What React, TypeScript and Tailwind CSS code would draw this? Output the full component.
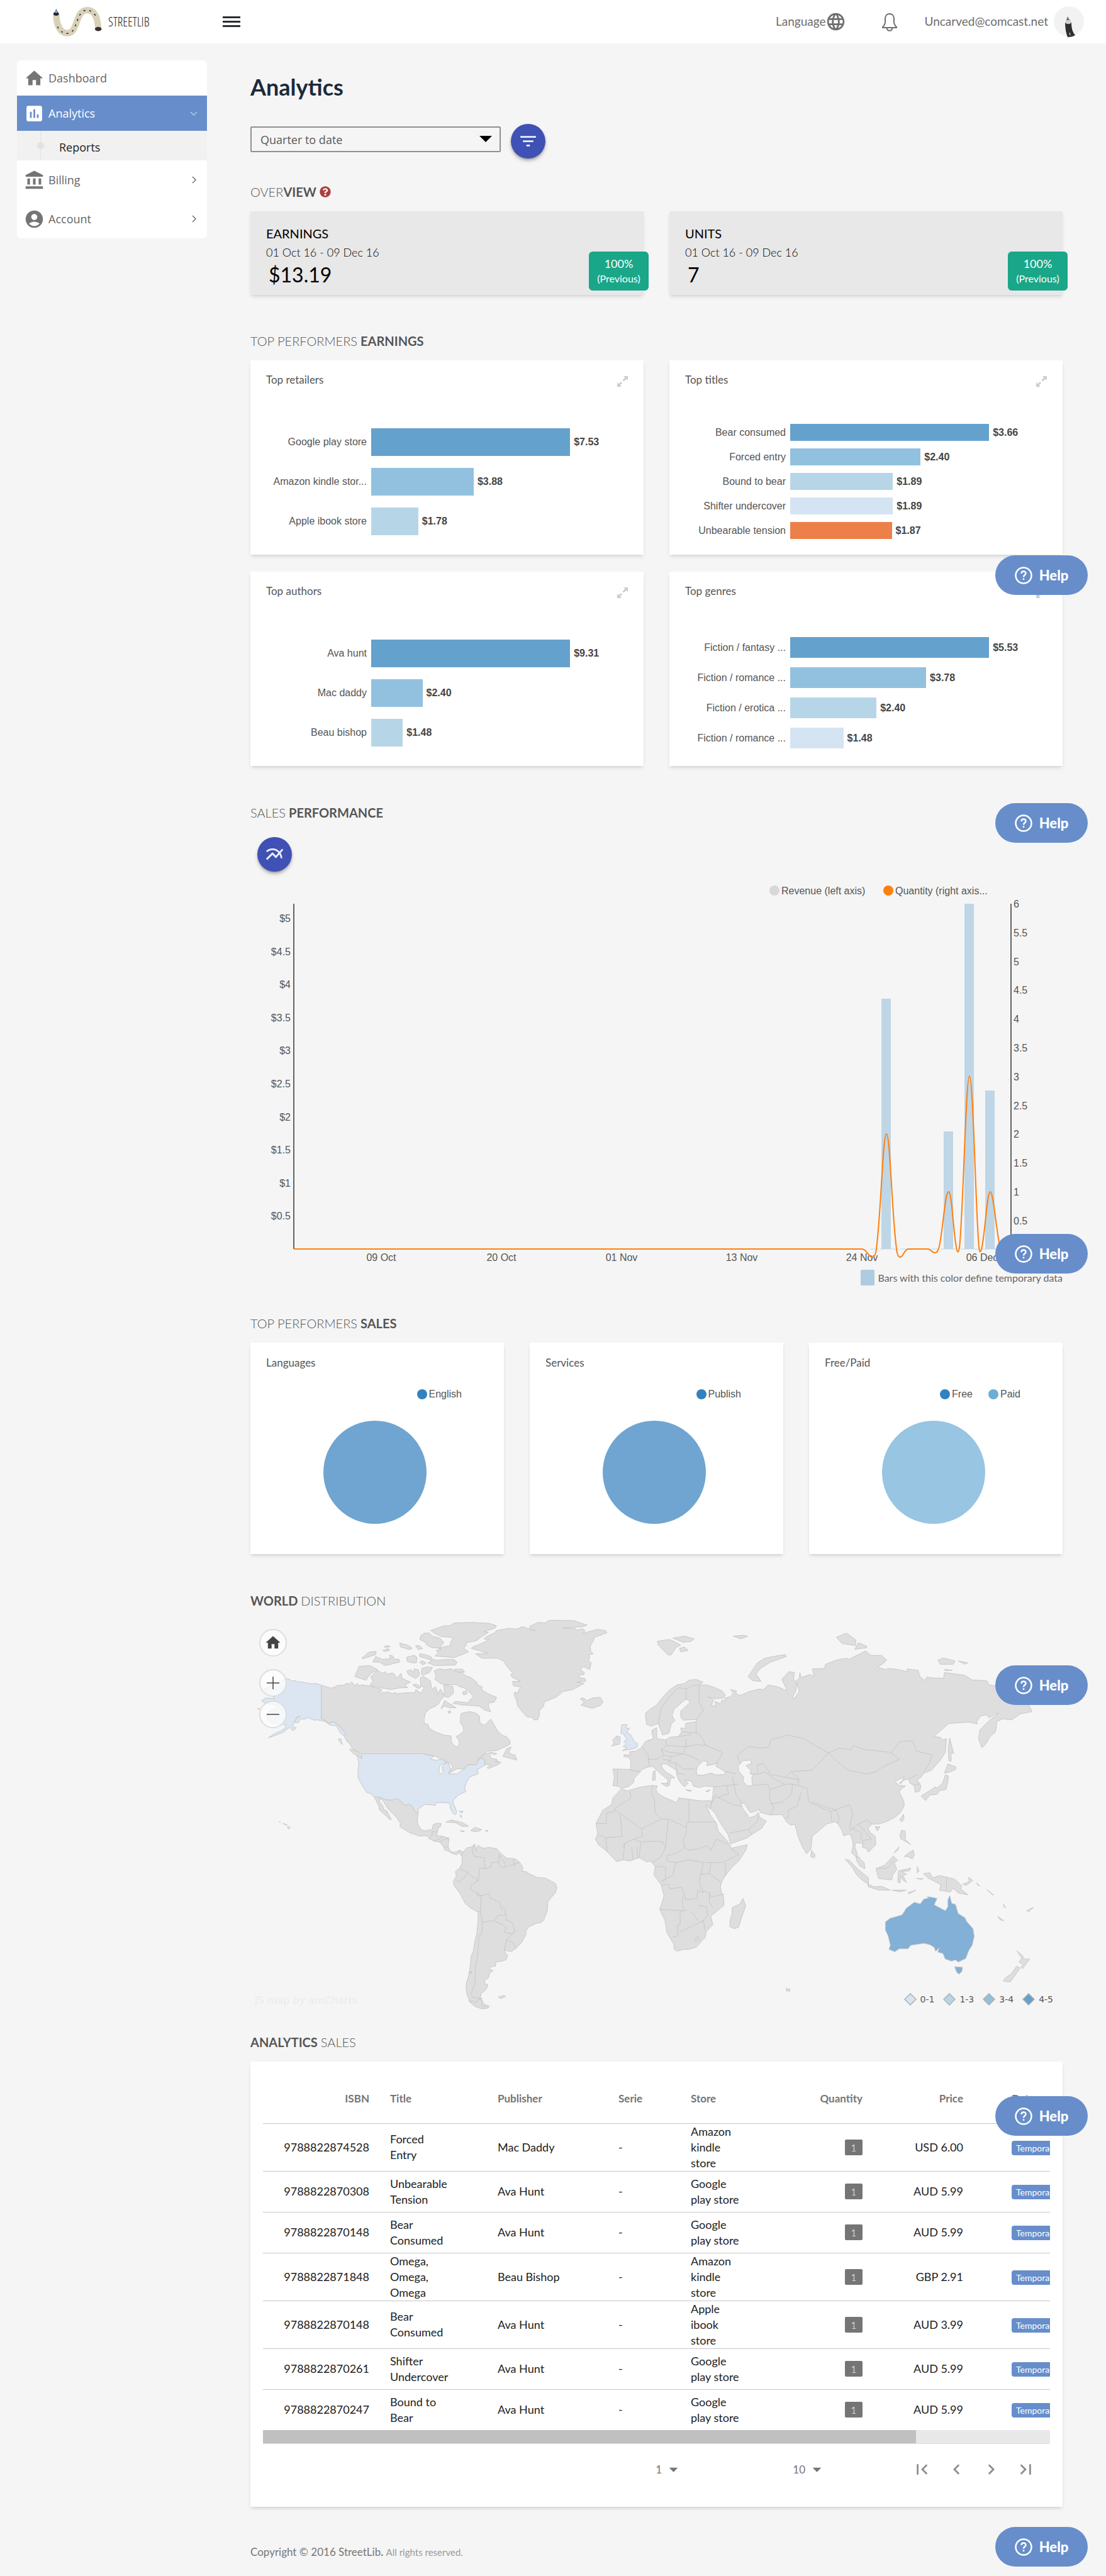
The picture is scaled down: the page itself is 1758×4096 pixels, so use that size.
import type { ReactNode } from 'react';
import {
  MdAccountBalance,
  MdAccountCircle,
  MdArrowDropDown,
  MdAssessment,
  MdChevronLeft,
  MdChevronRight,
  MdFilterList,
  MdFirstPage,
  MdHome,
  MdLanguage,
  MdLastPage,
  MdMultilineChart,
} from 'react-icons/md';
import { FaQuestionCircle } from 'react-icons/fa';

const BLUES = ['bg-[#65a1cd]', 'bg-[#91c1df]', 'bg-[#b6d6e7]', 'bg-[#d5e4f2]', 'bg-[#ed7f49]'];

type Bar = { label: string; value: number };

const RETAILERS: Bar[] = [
  { label: 'Google play store', value: 7.53 },
  { label: 'Amazon kindle stor...', value: 3.88 },
  { label: 'Apple ibook store', value: 1.78 },
];

const TITLES: Bar[] = [
  { label: 'Bear consumed', value: 3.66 },
  { label: 'Forced entry', value: 2.4 },
  { label: 'Bound to bear', value: 1.89 },
  { label: 'Shifter undercover', value: 1.89 },
  { label: 'Unbearable tension', value: 1.87 },
];

const AUTHORS: Bar[] = [
  { label: 'Ava hunt', value: 9.31 },
  { label: 'Mac daddy', value: 2.4 },
  { label: 'Beau bishop', value: 1.48 },
];

const GENRES: Bar[] = [
  { label: 'Fiction / fantasy ...', value: 5.53 },
  { label: 'Fiction / romance ...', value: 3.78 },
  { label: 'Fiction / erotica ...', value: 2.4 },
  { label: 'Fiction / romance ...', value: 1.48 },
];

const SALES = [
  { isbn: '9788822874528', title: 'Forced Entry', publisher: 'Mac Daddy', store: 'Amazon kindle store', price: 'USD 6.00' },
  { isbn: '9788822870308', title: 'Unbearable Tension', publisher: 'Ava Hunt', store: 'Google play store', price: 'AUD 5.99' },
  { isbn: '9788822870148', title: 'Bear Consumed', publisher: 'Ava Hunt', store: 'Google play store', price: 'AUD 5.99' },
  { isbn: '9788822871848', title: 'Omega, Omega, Omega', publisher: 'Beau Bishop', store: 'Amazon kindle store', price: 'GBP 2.91' },
  { isbn: '9788822870148', title: 'Bear Consumed', publisher: 'Ava Hunt', store: 'Apple ibook store', price: 'AUD 3.99' },
  { isbn: '9788822870261', title: 'Shifter Undercover', publisher: 'Ava Hunt', store: 'Google play store', price: 'AUD 5.99' },
  { isbn: '9788822870247', title: 'Bound to Bear', publisher: 'Ava Hunt', store: 'Google play store', price: 'AUD 5.99' },
];

// Americas, drawn in their own coordinate space
const AMERICAS = [
  'M288 346 323 357 332 354 340 352 345 347 368 346 382 339 390 342 398 334 410 347 420 340 425 349 432 345 449 347 470 350 485 356 503 359 508 366 495 370 503 374 523 372 530 370 545 377 555 372 562 377 590 374 628 373 631 362 650 376 655 365 662 355 649 348 647 320 657 314 672 322 684 330 687 352 692 362 702 350 712 379 720 360 732 379 729 392 721 400 715 412 700 424 683 430 665 448 661 470 662 486 674 487 680 502 700 515 735 528 759 530 760 552 770 565 780 571 789 560 787 545 777 532 788 527 805 513 803 498 792 481 795 450 803 446 828 442 850 448 862 458 864 483 880 492 903 469 928 513 945 528 960 533 973 548 973 560 950 572 925 583 905 585 893 585 870 603 854 619 868 607 880 597 895 593 905 590 925 595 915 598 900 590 900 600 905 612 925 615 928 622 918 622 940 626 925 637 893 649 890 645 903 633 882 634 882 618 874 613 862 613 852 634 818 635 805 650 780 650 752 665 765 642 758 632 738 620 700 603 662 597 657 592 655 595 434 595 425 590 400 576 392 560 382 552 372 533 377 520 360 502 345 486 333 478 316 485 297 470 288 468Z',
  'M480 752 498 752 525 762 550 763 552 759 568 759 580 770 582 777 595 782 605 777 615 782 624 797 630 806 639 810 636 840 640 855 650 870 663 875 690 870 694 852 705 848 723 848 720 860 714 862 712 870 706 892 730 895 752 902 749 920 749 935 755 945 762 952 775 952 790 945 800 950 801 963 797 966 786 953 780 962 765 958 752 950 735 944 732 932 717 915 697 912 680 904 670 892 645 894 610 882 573 860 575 847 560 825 540 805 525 788 512 764 498 757 500 770 510 783 515 797 525 802 542 832 538 836 523 820 513 812 498 797 497 785Z',
  'M801 955 815 937 833 933 846 923 845 935 851 950 850 935 858 928 875 938 900 935 925 940 935 952 960 974 990 976 1007 988 1020 1008 1015 1021 1035 1024 1040 1030 1064 1040 1070 1044 1100 1046 1115 1054 1137 1065 1143 1083 1137 1100 1120 1120 1110 1132 1108 1165 1100 1185 1095 1200 1085 1208 1070 1210 1040 1224 1031 1238 1030 1253 1015 1280 995 1300 978 1313 952 1308 955 1316 965 1328 958 1343 940 1349 922 1350 920 1366 900 1369 900 1378 912 1382 898 1392 895 1408 880 1418 882 1430 893 1434 885 1452 868 1465 865 1478 870 1485 860 1485 852 1496 825 1490 817 1470 813 1445 815 1425 823 1400 825 1385 830 1385 830 1395 835 1385 825 1390 830 1350 830 1335 840 1310 846 1270 852 1250 857 1200 857 1170 830 1155 810 1138 790 1100 768 1070 768 1055 778 1040 775 1022 790 1010 800 990 798 966Z',
  'M822 1492 850 1500 857 1488 870 1488 880 1505 898 1511 893 1518 870 1521 845 1512Z',
  'M835 208 875 192 897 180 878 178 890 168 920 155 922 148 965 140 1000 142 1017 133 1065 150 1045 140 1045 132 1075 118 1100 120 1113 111 1145 110 1205 112 1253 128 1240 133 1165 139 1210 140 1216 146 1235 141 1245 148 1237 158 1290 143 1320 148 1324 156 1300 165 1275 174 1278 180 1264 203 1265 222 1275 232 1260 235 1262 248 1257 255 1267 265 1262 290 1240 278 1228 290 1243 300 1240 308 1225 308 1222 318 1245 322 1247 332 1215 335 1241 340 1200 362 1165 369 1140 390 1097 407 1095 422 1080 438 1080 452 1073 472 1060 472 1050 462 1035 462 1015 440 1000 420 997 402 988 382 990 370 998 375 1012 352 985 348 982 333 1010 332 982 318 975 308 983 303 963 280 950 258 928 248 870 248 848 232 895 230 833 213Z',
  'M685 147 735 130 755 130 770 120 835 118 870 120 900 122 923 130 920 138 890 148 877 152 895 154 870 170 850 185 812 192 815 200 805 212 822 225 798 235 770 246 700 240 712 230 705 220 725 217 712 213 740 205 760 202 755 195 765 178 758 172 725 170 700 158Z',
  'M650 165 662 157 680 157 690 168 718 175 733 190 718 210 690 210 670 200 665 190 645 180Z',
  'M645 232 665 235 685 242 690 250 704 256 735 253 770 253 780 262 775 273 735 274 700 275 675 265 690 255 665 248 645 243Z',
  'M697 295 715 286 735 290 760 286 772 295 800 300 812 312 830 318 852 335 855 345 872 352 870 362 892 377 924 390 915 408 895 410 895 425 903 443 878 435 862 422 835 420 800 418 765 412 775 405 822 410 828 398 840 390 830 375 805 355 790 352 780 345 762 343 740 345 722 340 700 325 705 310Z',
  'M465 345 475 332 467 315 492 292 510 303 520 297 525 305 550 302 562 320 578 303 580 320 590 325 612 335 590 345 602 355 570 356 540 362 475 350Z',
  'M410 315 425 278 465 275 492 290 465 305 450 328Z',
  'M598 295 612 290 625 300 625 287 640 290 645 310 630 322 605 308Z',
  'M650 303 653 285 672 280 692 282 680 300 655 310Z',
  'M475 262 485 242 510 252 540 250 535 237 545 238 555 252 570 252 572 262 520 275 500 263Z',
  'M435 248 460 226 487 223 485 235 440 250Z',
  'M597 245 625 237 635 245 633 265 620 265 600 260Z',
  'M572 193 600 200 618 212 610 217 575 207Z',
  'M630 202 645 203 655 213 640 217Z',
  'M515 207 525 202 538 206 525 209Z',
  'M510 220 530 213 537 219 520 224Z',
  'M645 262 655 257 668 266 655 272Z',
  'M770 288 800 288 808 298 780 299Z',
  'M620 345 632 342 650 352 640 359Z',
  'M722 432 730 415 735 402 765 420 777 428 755 428 735 422Z',
  'M800 372 812 366 818 376 805 382Z',
  'M747 442 755 438 758 446 750 448Z',
  'M733 345 765 350 768 375 750 390 735 388Z',
  'M390 578 420 587 430 600 436 613 405 595Z',
  'M947 605 960 577 977 570 968 590 985 600 990 598 998 618 975 612Z',
  'M1227 395 1240 392 1250 402 1275 392 1300 390 1311 407 1300 420 1272 430 1245 423 1230 418 1243 408Z',
  'M740 843 760 835 800 845 823 858 800 859 775 845Z',
  'M830 874 845 862 870 870 862 875 845 878Z',
  'M882 873 893 874 890 878Z',
  'M792 874 808 876 800 879Z',
  'M787 804 802 803 800 810Z',
  'M792 816 798 822 796 828Z',
  'M930 1478 950 1472 957 1476 940 1484Z',
  'M1345 545 1360 530 1373 545 1370 560 1342 567 1350 555Z',
  'M57 430 64 432 60 436Z',
];

const AMERICAS_LIGHT = [
  'M162 322 175 326 180 331 194 329 201 334 216 334 250 341 270 340 288 346V468L297 471 316 485 333 478 345 488 360 502 377 522 371 532 358 520 343 494 320 491 300 477 275 472 262 473 235 462 230 470 212 468 204 483 190 480 200 464 211 459 200 461 187 486 185 495 165 504 153 516 125 527 96 537 118 522 140 512 157 503 158 488 130 488 110 485 92 470 88 455 100 440 125 430 130 420 110 415 85 412 70 402 90 392 120 395 104 380 85 372 80 360 105 350Z',
  'M178 504 190 497 198 501 185 511Z',
  'M350 542 360 540 361 552 366 562 354 552Z',
  'M434 595 434 613 418 600 424 630 421 660 421 682 427 693 440 715 452 735 468 740 480 752 498 752 525 762 550 763 552 759 568 759 580 770 582 777 595 782 605 777 615 782 624 797 630 806 639 810 640 795 655 785 665 778 702 782 703 773 735 772 755 775 755 790 765 810 772 817 778 812 778 800 768 778 766 765 785 745 812 732 808 722 812 706 825 680 858 667 854 652 882 636 880 618 874 613 862 613 852 634 818 636 808 650 780 668 750 668 756 650 750 630 738 628 726 642 730 662 720 669 714 660 718 638 735 628 745 625 722 613 705 619 683 614 697 604 662 597 657 592 655 595Z',
  'M1378 490 1398 489 1392 502 1407 502 1397 518 1410 525 1422 548 1436 558 1433 572 1415 578 1380 584 1398 573 1383 569 1395 560 1385 550 1397 545 1388 527 1375 520Z',
  'M1363 530 1375 535 1370 543 1362 540Z',
  'M165 858 176 863 168 868Z',
  'M148 848 160 851 165 854 155 852Z',
  'M136 841 140 842 137 844Z',
];

const AMERICAS_BORDERS = [
  'M845 925 835 945 843 968 880 972 880 1000 885 1012 862 1010 858 1055 835 1040 820 1025 790 1012',
  'M885 1012 905 1005 905 990 932 988 935 958',
  'M932 960 950 985 958 1005 1007 990M985 978 990 1005M958 1005 940 1008 930 990',
  'M858 1055 835 1070 828 1085 850 1100 868 1110 897 1102 900 1118 935 1135 940 1155 955 1160 958 1180 928 1182 918 1200 885 1205 872 1208 865 1165 868 1110 855 1112 856 1098M857 1170 865 1165',
  'M818 1025 810 1040 790 1060 778 1055',
  'M958 1180 960 1200 978 1205 984 1218 990 1240 980 1248 950 1243 960 1228 945 1215 918 1203',
  'M990 1240 960 1270 952 1308M960 1270 982 1280 995 1300',
  'M872 1208 872 1240 860 1258 855 1330 848 1365 845 1430 832 1465 838 1480 872 1483M870 1488V1512L890 1512',
  'M680 904 690 890 690 878 706 878M697 912 715 905 730 895M717 915 735 905 749 903M732 932 749 935M786 953 790 945',
];

const OLD_WORLD = [
  // Europe and Asia
  'M-9 448 5 435 30 418 50 390 75 362 100 345 125 340 140 328 165 325 188 335 178 345 200 345 230 355 255 368 265 382 258 393 230 395 205 388 225 400 217 418 232 424 230 405 250 415 252 402 268 400 262 393 283 388 292 375 282 362 303 367 300 377 318 383 345 370 380 360 395 362 412 345 445 352 475 367 472 355 458 325 482 297 502 300 498 320 510 345 505 370 495 390 500 395 518 370 512 345 508 330 518 320 520 300 524 318 555 307 570 315 563 287 605 285 608 270 645 255 680 248 688 252 720 235 745 222 765 238 800 238 818 255 805 268 785 280 815 290 820 285 850 288 887 297 887 287 925 292 930 312 948 330 955 316 975 320 1000 320 1012 322 1015 300 1085 310 1110 327 1160 330 1168 345 1195 350 1240 380 1305 420 1315 442 1275 450 1245 472 1215 468 1195 478 1190 515 1170 535 1155 562 1143 573 1132 540 1137 508 1165 478 1200 447 1190 450 1168 465 1160 453 1140 458 1125 478 1128 487 1100 480 1030 485 1005 508 978 533 1000 535 1010 545 1022 540 1018 590 1000 620 970 655 945 665 935 680 922 690 935 712 930 730 915 735 912 712 895 700 895 687 875 690 865 705 860 700 868 697 878 677 860 688 845 695 860 710 882 712 865 725 860 733 875 765 878 782 865 808 845 826 815 842 790 850 768 850 753 865 760 880 778 895 780 925 755 952 747 938 735 935 735 920 712 918 708 930 715 955 718 970 740 990 743 1012 725 1002 715 985 712 968 697 955 703 925 698 900 690 885 670 893 665 875 650 848 640 842 625 846 612 850 590 870 562 895 558 940 543 958 530 935 515 900 503 850 490 855 475 843 460 816 418 817 385 808 380 797 365 805 350 808 340 792 330 775 318 773 325 795 340 815 345 828 365 822 378 808 382 825 405 840 390 865 355 888 340 900 282 922 275 890 250 850 230 812 215 795 205 778 218 772 222 745 225 715 195 712 175 718 155 712 150 695 125 690 138 702 125 715 115 705 105 690 98 670 97 655 75 640 62 632 45 632 48 645 62 662 80 672 92 683 78 682 75 698 72 712 66 700 68 690 48 672 30 655 15 640 -5 645 -20 652 -33 668 -48 685 -50 700 -68 715 -92 720 -100 714 -120 710 -115 680 -120 650 -60 652 -58 625 -65 608 -83 605 -82 598 -60 600 -64 588 -40 585 -22 572 -8 550 5 545 0 548 18 540 13 510 30 500 30 540 60 545 75 535 105 532 115 515 112 502 130 502 128 485 165 478 170 470 120 473 112 462 112 440 143 410 140 400 128 398 115 410 90 432 82 455 92 475 80 485 72 520 50 527 35 485 10 495 -5 488Z',
  // Africa
  'M-91 722 -70 730 -30 717 0 712 15 710 32 712 27 725 35 740 60 755 98 772 105 755 140 760 180 766 215 765 218 780 212 795 197 778 215 820 235 848 240 875 262 900 280 925 285 938 340 925 335 945 310 985 285 1010 265 1037 252 1060 248 1080 252 1100 258 1105 260 1145 215 1185 222 1215 200 1240 195 1262 165 1297 140 1305 118 1306 100 1312 90 1305 88 1285 65 1245 58 1200 40 1160 50 1130 55 1110 45 1070 20 1035 25 1005 10 985 -5 987 -30 972 -45 978 -62 984 -85 980 -107 987 -140 950 -170 925 -180 905 -172 885 -178 848 -155 800 -125 780 -120 755Z',
  'M325 1120 335 1147 325 1175 310 1225 295 1230 280 1222 282 1195 288 1175 288 1153 315 1140Z',
  'M343 315 365 280 375 265 400 248 440 240 470 235 474 242 420 262 385 285 370 305 387 332 360 330Z',
  'M32 187 60 182 75 180 112 200 95 210 80 235 70 237 55 222 35 200Z',
  'M85 175 125 168 158 178 145 188 120 190Z',
  'M108 212 125 208 138 220 112 225Z',
  'M292 168 325 165 342 168 318 178Z',
  'M645 172 680 157 712 182 710 202 665 195Z',
  'M720 192 750 205 748 210 708 216Z',
  'M993 255 1010 247 1052 258 1045 270 1000 270Z',
  'M1062 258 1095 265 1085 270Z',
  'M1015 288 1042 292 1018 293Z',
  'M1018 672 1028 675 1028 690 1020 725 1000 728 990 742 965 745 950 765 935 748 955 735 985 715 990 720 1010 700Z',
  'M1027 632 1055 643 1053 652 1030 662 1015 665Z',
  'M1033 538 1047 595 1038 590 1038 622 1030 620 1028 580Z',
  'M875 815 877 830 870 842 862 835Z',
  'M778 860 795 860 785 875Z',
  'M868 873 880 875 882 895 880 905 900 925 885 915 865 903 863 890Z',
  'M877 968 892 955 908 945 912 962 905 977 890 968Z',
  'M842 955 860 932 855 945Z',
  'M560 945 572 962 570 973 557 968Z',
  'M675 978 690 982 720 1015 755 1045 755 1068 735 1055 715 1035 700 1008Z',
  'M752 1068 775 1078 800 1076 830 1090 790 1090 755 1078Z',
  'M780 1012 810 1000 840 966 855 982 843 990 852 1015 838 1035 835 1053 790 1048Z',
  'M858 1020 900 1010 895 1020 868 1022 885 1032 873 1038 885 1062 875 1055 865 1040 863 1065 855 1060Z',
  'M890 1100 917 1090 895 1103Z',
  'M835 1090 885 1090 862 1096Z',
  'M922 1005 928 1020 922 1028Z',
  'M920 1048 943 1048 935 1051Z',
  'M943 1030 965 1027 975 1045 1000 1037 1050 1050 1075 1075 1070 1085 1096 1107 1062 1100 1045 1083 1035 1097 998 1090 1003 1070 970 1052 957 1045Z',
  'M1078 1068 1100 1060 1098 1044 1112 1055 1090 1073Z',
  'M1125 1063 1136 1075 1130 1073Z',
  'M1160 1088 1184 1108 1175 1103Z',
  'M1217 1140 1225 1155 1219 1150Z',
  'M1198 1185 1219 1202 1205 1197Z',
  'M1297 1165 1320 1152 1305 1168Z',
  'M1263 1310 1283 1328 1287 1340 1307 1340 1295 1358 1283 1375 1278 1370 1283 1360 1270 1350 1280 1338Z',
  'M1262 1366 1275 1372 1262 1392 1240 1424 1217 1420 1222 1410 1245 1393Z',
  'M473 1447 487 1450 485 1457 474 1456Z',
  'M45 702 68 702 65 715Z',
  'M18 658 25 657 25 690 15 692Z',
  'M130 725 150 729 140 731Z',
  'M197 732 212 725 208 732Z',
];

const OLD_WORLD_BORDERS = [
  'M-62 732 -58 755 -115 795',
  'M-115 797 -22 868 45 832 25 810 22 760 12 742 15 710',
  'M45 832 70 832 132 862 132 843 140 843 140 760M140 843 232 843M132 862 130 885 120 910 125 935',
  'M-95 818 -88 895 -145 900M-22 868 -18 895 -50 905 -80 920 -88 935',
  'M-20 915 20 912 50 915 60 935 45 970 15 990M70 832 65 880 60 935M-50 905 -25 915 -30 972',
  'M-80 920 -85 980M-115 797 -115 805 -142 810 -142 848 -178 848',
  'M-170 890 -145 900 -140 950M-55 935 -52 978M-38 935 -36 973',
  'M125 935 140 945 175 940 205 928 215 945 235 905 275 925M125 935 100 955 65 965 65 985 100 990 140 980 190 990 215 990 255 990 312 960 285 940',
  'M190 990 180 1035 175 1060 190 1100 170 1090 168 1120 130 1125 115 1080 75 1085 70 1070 45 1070',
  'M25 1005 60 1005 60 1045 45 1060M45 1060 85 1035 95 990',
  'M180 1032 210 1030 250 1060M190 1092 210 1100 215 1115 258 1105M210 1100 210 1135 222 1152',
  'M40 1160 130 1165 118 1150 118 1112M120 1165 110 1170 110 1215 102 1215 102 1255 85 1260',
  'M110 1240 150 1222 190 1200 205 1180 200 1150M145 1165 170 1200M170 1145 200 1150M190 1200 195 1238',
  'M215 990 210 1030M265 990 265 1037M160 1268 170 1258 175 1268 162 1275Z',
  'M35 485 45 430 75 385 105 355 130 360 160 345 175 345 175 410 190 438 165 470M130 360 130 398',
  'M-60 655 -25 660M-105 655 -105 710',
  'M60 545 65 565 45 580 55 600 30 615 0 615M65 565 130 570 130 540',
  'M130 570 165 562 195 565 190 545 170 520 115 515M165 478 165 520M105 532 150 525',
  'M55 600 80 605 120 595 130 570M80 605 70 625 100 630 120 650 160 650M120 595 150 605 175 620',
  'M195 562 215 572 255 590 250 605 230 635M-20 570 0 600 5 640',
  'M225 715 270 710 310 705M240 652 300 668M45 580 75 590 120 595M50 615 80 620M95 630 100 665 125 670',
  'M290 680 300 740 320 775M358 710 410 705 418 725 415 755 430 790 420 817',
  'M418 725 475 705 495 705 492 740 460 770 420 778M495 705 545 720 550 770 625 805 690 780 700 810 690 870',
  'M525 735 510 785 480 800 480 825 472 828M562 770 625 795',
  'M235 740 215 780M235 750 290 780 320 785M278 883 345 870 375 840 378 820M345 870 355 888M270 710 275 740 235 755',
  'M310 660 318 640 305 600 345 568 385 575 415 570 420 545 480 527 535 540 580 570 618 592 580 635 560 655 490 660 470 680 420 670 395 630 375 635 375 670 355 668',
  'M375 670 400 660 430 685 465 705M490 660 515 685 515 710M470 680 520 690',
  'M618 592 655 575 695 580 702 565 740 580 790 585 830 590 860 615 800 645 780 660 750 668 685 655 650 625 618 592',
  'M830 595 840 580 865 550 905 548 920 585 975 600 960 635 945 660',
  'M625 790 645 802 655 830 648 850M625 808 630 840',
  'M690 875 720 850 750 835 768 850M720 850 750 885 765 905 735 910 735 935M695 865 730 880 730 905',
  'M895 685 925 670M912 710 932 703M710 968 728 972M1022 1043V1095M783 1012 820 1010 840 985',
];

const INLAND_SEAS = [
  'M308 640 325 620 352 618 355 630 335 638 352 655 350 668 362 672 355 680 358 710 340 712 325 695 328 680 312 660Z',
  'M165 660 170 640 190 620 205 625 200 638 220 635 240 628 232 640 265 660 262 670 235 672 215 665 190 673 168 672Z',
];

const AUSTRALIA = [
  'M1033 1110 1040 1138 1053 1142 1062 1175 1085 1190 1092 1205 1113 1230 1117 1258 1110 1290 1098 1310 1088 1338 1063 1351 1052 1343 1040 1348 1018 1340 1010 1320 992 1315 998 1298 985 1312 980 1298 965 1288 945 1283 900 1290 890 1303 860 1303 845 1314 825 1305 830 1290 822 1255 813 1235 813 1205 830 1192 870 1180 885 1155 912 1134 932 1140 945 1122 962 1119 955 1113 990 1120 980 1143 1018 1165 1027 1150 1027 1125Z',
  'M1050 1368 1077 1370 1075 1385 1065 1395 1057 1388Z',
];

// quantity curve, in the same space as the chart's bars
const QUANTITY_PATH =
  'M69 584H972C980 584 982 597 989 597C992 597 994 592 995 584C1003 520 1005 401 1011 401C1017 401 1019 520 1027 584C1028 593 1030 597 1033 597C1038 597 1039 584 1046 584H1077C1082 584 1083 590 1088 590C1092 590 1093 586 1095 580C1102 545 1104 493 1110 493C1115 493 1117 555 1122 580C1123 590 1125 592 1127 582C1133 530 1137 309 1143 309C1149 309 1153 530 1158 580C1159 592 1161 590 1163 580C1168 555 1171 493 1176 493C1181 493 1185 550 1191 578C1193 588 1196 590 1200 590';

const HELP_TOPS = ['top-[883px]', 'top-[1277px]', 'top-[1962px]', 'top-[2648px]', 'top-[3333px]', 'top-[4018px]'];

function Logo() {
  return (
    <a href="#" className="flex w-[173px] items-center gap-[9px]">
      <svg className="h-[50px] w-[80px] shrink-0" viewBox="30 30 350 220" fill="none">
        <path
          d="M57 90C59 170 90 218 133 218C215 218 185 57 275 57C325 57 347 110 351 188"
          stroke="#d8d1b8"
          strokeWidth="45"
        />
        <path
          d="M66 172l6 12M92 206l11 6M128 220h15M168 206l8-9M190 170l4-13M204 132l5-14M220 94l7-11M248 62l13-4M288 60l13 4M323 84l9 10"
          stroke="#111"
          strokeWidth="6"
        />
        <path d="M46 72 57 45 69 72Z" fill="#5f8ed0" />
        <path d="M36 84 45 70C52 78 60 78 69 70L77 84C74 100 40 100 36 84Z" fill="#262626" />
        <ellipse cx="351" cy="189" rx="23" ry="15" fill="#333" />
      </svg>
      <span className="font-['Open_Sans_Condensed_Light','Roboto_Condensed','Liberation_Sans_Narrow','Lato',sans-serif] text-xl font-light text-[#222]">
        STREETLIB
      </span>
    </a>
  );
}

function Header() {
  return (
    <header className="flex h-[69px] items-center bg-white pl-[83px] pr-[34px]">
      <Logo />
      <button aria-label="Toggle menu" className="ml-[98px] flex w-7 flex-col gap-1">
        <span className="h-[3px] bg-[#2a2d33]" />
        <span className="h-[3px] bg-[#2a2d33]" />
        <span className="h-[3px] bg-[#2a2d33]" />
      </button>
      <div className="ml-auto flex items-center text-[19px] text-[#6e6e6e]">
        <button className="flex items-center">
          Language
          <MdLanguage className="size-[33px]" />
        </button>
        <button aria-label="Notifications" className="ml-[56px]">
          <svg className="h-[30px] w-[26px]" viewBox="0 0 26 30" fill="none" stroke="#6e6e6e" strokeWidth="2">
            <path d="M13 2C8 2 6 6 6 10V15C6 19 4 21 2 23V24H24V23C22 21 20 19 20 15V10C20 6 18 2 13 2Z" strokeLinejoin="round" />
            <path d="M9 25C9 30 17 30 17 25" />
          </svg>
        </button>
        <a href="#" className="ml-[42px]">
          Uncarved@comcast.net
        </a>
        <svg className="ml-[9px] size-[49px]" viewBox="0 0 49 49">
          <circle cx="24" cy="24" r="24" fill="#f2f2f2" />
          <path d="M18 25C18 34 19 42 22 49C27 49 31 48 34 46C29 40 28 33 28 25Z" fill="#2f2f2f" />
          <path d="M18 26 20 20 26 20 28 26C25 29 21 29 18 26Z" fill="#d0d0d0" />
          <path d="M20 22 22 16 25 22Z" fill="#6e6e6e" />
          <path d="M25 42l1 4" stroke="#fff" strokeWidth="1" />
        </svg>
      </div>
    </header>
  );
}

function Chevron({ className }: { className: string }) {
  return (
    <svg className={className} viewBox="0 0 12 12" fill="none" stroke="currentColor" strokeWidth="1.4">
      <path d="M4 1 9 6 4 11" />
    </svg>
  );
}

function Sidebar() {
  return (
    <aside className="mt-[27px] h-fit w-[302px] shrink-0 overflow-hidden rounded-md bg-white font-['Open_Sans',sans-serif] text-lg text-[#666]">
      <nav>
        <a href="#" className="flex h-14 items-center gap-[6px] pl-[11px]">
          <MdHome className="size-[33px] text-[#757575]" />
          Dashboard
        </a>
        <a href="#" className="flex h-14 items-center gap-[6px] bg-[#678ecb] pl-[11px] pr-[15px] text-white">
          <MdAssessment className="size-[33px]" />
          Analytics
          <Chevron className="ml-auto size-3 rotate-90 text-[#b5cae8]" />
        </a>
        <div className="flex h-[47px] bg-[#f1f1f1]">
          <span className="ml-[31px] flex w-3 items-center justify-center bg-[linear-gradient(#e2e2e2,#e2e2e2)] bg-[length:1px_100%] bg-center bg-no-repeat">
            <span className="size-[11px] rounded-full bg-[#e2e2e2]" />
          </span>
          <a href="#" className="ml-6 self-center pt-[5px] text-[#212121]">
            Reports
          </a>
        </div>
        <a href="#" className="flex h-[62px] items-center gap-[6px] pl-[11px] pr-[15px]">
          <MdAccountBalance className="size-[33px] text-[#757575]" />
          Billing
          <Chevron className="ml-auto size-3" />
        </a>
        <a href="#" className="flex h-[62px] items-center gap-[6px] pl-[11px] pr-[15px]">
          <MdAccountCircle className="size-[33px] text-[#757575]" />
          Account
          <Chevron className="ml-auto size-3" />
        </a>
      </nav>
    </aside>
  );
}

function Heading({ children, className }: { children: ReactNode; className: string }) {
  return (
    <h2 className={`${className} flex items-center gap-[5px] text-xl/7 font-light text-[#555]`}>{children}</h2>
  );
}

function OverviewCard({ title, value }: { title: string; value: string }) {
  return (
    <div className="relative h-[133px] bg-[#e8e8e8] pl-[25px] pt-[21px] text-black shadow-md shadow-black/10">
      <h3 className="text-xl/7">{title}</h3>
      <p className="text-lg/8 font-light">01 Oct 16 - 09 Dec 16</p>
      <p className="pl-1 text-[32px]/10">{value}</p>
      <div className="absolute -right-2 bottom-[7px] flex h-[62px] w-[95px] flex-col items-center rounded-md bg-[#1aa688] pt-[7px] text-white">
        <span className="text-lg/6">100%</span>
        <span className="text-base/6">(Previous)</span>
      </div>
    </div>
  );
}

function ExpandIcon() {
  return (
    <svg className="size-[17px]" viewBox="0 0 17 17" fill="#ccc">
      <path d="M10 0H17V7L14.500 4.500 10.500 8.500 8.500 6.500 12.500 2.500Z" />
      <path d="M7 17H0V10L2.500 12.500 6 9 8 11 4.500 14.500Z" />
    </svg>
  );
}

function BarCard({
  title,
  bars,
  rowClass,
  barClass,
}: {
  title: string;
  bars: Bar[];
  rowClass: string;
  barClass: string;
}) {
  const max = Math.max(...bars.map((bar) => bar.value));

  return (
    <div className="flex h-[309px] flex-col bg-white shadow-md shadow-black/10">
      <div className="flex h-[76px] shrink-0 items-start justify-between px-[25px] pt-[19px]">
        <h3 className="text-[17px]/6 text-[#555]">{title}</h3>
        <button aria-label={`Expand ${title}`} className="pt-[6px]">
          <ExpandIcon />
        </button>
      </div>
      <div className="flex flex-1 flex-col justify-center font-['Liberation_Sans',Arial,sans-serif] text-base">
        {bars.map((bar, i) => (
          <div key={i} className={`${rowClass} flex items-center pr-6`}>
            <span className="w-[185px] shrink-0 text-right text-[#555]">{bar.label}</span>
            <div className="ml-[7px] flex flex-1 items-center gap-[6px]">
              <div className={`${barClass} ${BLUES[i]}`} style={{ width: `${(bar.value / max) * 77.3}%` }} />
              <span className="font-bold text-[#444]">${bar.value.toFixed(2)}</span>
            </div>
          </div>
        ))}
      </div>
    </div>
  );
}

function SalesChart() {
  const left = ['$5', '$4.5', '$4', '$3.5', '$3', '$2.5', '$2', '$1.5', '$1', '$0.5'];
  const right = ['6', '5.5', '5', '4.5', '4', '3.5', '3', '2.5', '2', '1.5', '1', '0.5'];
  const dates = ['09 Oct', '20 Oct', '01 Nov', '13 Nov', '24 Nov', '06 Dec'];

  return (
    <svg
      className="mt-4 h-auto w-full font-['Liberation_Sans',Arial,sans-serif] text-base"
      viewBox="0 0 1291 610"
      fill="#555"
    >
      <circle cx="833" cy="14" r="8" fill="#d8d8d8" />
      <text x="844" y="20">Revenue (left axis)</text>
      <circle cx="1014" cy="14" r="8" fill="#ff7f0e" />
      <text x="1025" y="20">Quantity (right axis...</text>
      {left.map((label, i) => (
        <text key={label} x="64" y={64 + i * 52.6} textAnchor="end">
          {label}
        </text>
      ))}
      {right.map((label, i) => (
        <text key={label} x="1213" y={41 + i * 45.8}>
          {label}
        </text>
      ))}
      {dates.map((label, i) => (
        <text key={label} x={208 + i * 191} y="603" textAnchor="middle">
          {label}
        </text>
      ))}
      <g fill="#bed6e6">
        <rect x="1003" y="186" width="15" height="398" />
        <rect x="1102" y="397" width="15" height="187" />
        <rect x="1135" y="35" width="15" height="549" />
        <rect x="1168" y="332" width="15" height="252" />
      </g>
      <path d="M69 35V584M1209 35V584" fill="none" stroke="#333" strokeWidth="1.500" />
      <path d="M985 584H1197" stroke="#bed6e6" strokeDasharray="14 2" />
      <path d={QUANTITY_PATH} fill="none" stroke="#ff7f0e" strokeWidth="2" />
    </svg>
  );
}

function PieCard({ title, legend, pieClass }: { title: string; legend: [string, string][]; pieClass: string }) {
  return (
    <div className="flex h-[336px] flex-col bg-white pt-[20px] shadow-md shadow-black/10">
      <h3 className="pl-[25px] text-[17px]/6 text-[#555]">{title}</h3>
      <ul className="mt-[26px] flex justify-end gap-[25px] pr-[67px] font-['Liberation_Sans',Arial,sans-serif] text-base/6 text-[#555]">
        {legend.map(([label, dot]) => (
          <li key={label} className="flex items-center gap-[3px]">
            <span className={`${dot} size-4 rounded-full`} />
            {label}
          </li>
        ))}
      </ul>
      <div className="mt-[30px] flex justify-center pr-[7px]">
        <div className={`${pieClass} size-[164px] rounded-full`} />
      </div>
    </div>
  );
}

function MapPaths({ paths, fill }: { paths: string[]; fill: string }) {
  return (
    <g fill={fill} stroke="#c8c8c8" strokeWidth="1" strokeLinejoin="round">
      {paths.map((d) => (
        <path key={d} d={d} vectorEffect="non-scaling-stroke" />
      ))}
    </g>
  );
}

function WorldMap() {
  const scale: [string, string][] = [
    ['0-1', 'fill-[#d5e4f2]'],
    ['1-3', 'fill-[#b6d6e7]'],
    ['3-4', 'fill-[#91c1df]'],
    ['4-5', 'fill-[#65a1cd]'],
  ];
  const control =
    'flex size-[44px] items-center justify-center rounded-full border-2 border-[#ddd] bg-white/70 text-[#444]';

  return (
    <div className="relative mt-3 font-['DejaVu_Sans',Verdana,sans-serif]">
      <svg className="h-auto w-full" viewBox="0 0 1291 630">
        <g transform="translate(-13.400 -43) scale(.438)">
          <MapPaths paths={AMERICAS} fill="#dedede" />
          <MapPaths paths={AMERICAS_LIGHT} fill="#dbe6f2" />
          <MapPaths paths={AMERICAS_BORDERS} fill="none" />
        </g>
        <g transform="translate(632 -43) scale(.4642 .438)">
          <MapPaths paths={OLD_WORLD} fill="#dedede" />
          <MapPaths paths={OLD_WORLD_BORDERS} fill="none" />
          <MapPaths paths={INLAND_SEAS} fill="#f5f5f5" />
          <MapPaths paths={AUSTRALIA} fill="#82b0d6" />
        </g>
      </svg>
      <div className="absolute left-[14px] top-[19px] flex flex-col">
        <button aria-label="Reset map" className={control}>
          <MdHome className="size-7" />
        </button>
        <button aria-label="Zoom in" className={`${control} mt-5`}>
          <svg className="size-5" viewBox="0 0 20 20" stroke="currentColor" strokeWidth="1.500">
            <path d="M10 0V20M0 10H20" />
          </svg>
        </button>
        <button aria-label="Zoom out" className={`${control} mt-[6px]`}>
          <svg className="size-5" viewBox="0 0 20 20" stroke="currentColor" strokeWidth="1.500">
            <path d="M0 10H20" />
          </svg>
        </button>
      </div>
      <a href="#" className="absolute bottom-2 left-[7px] text-base text-[#ebebeb]">
        JS map by amCharts
      </a>
      <ul className="absolute bottom-3 right-[15px] flex gap-[14px] text-sm text-[#555]">
        {scale.map(([label, fill]) => (
          <li key={label} className="flex items-center gap-[6px]">
            <svg className={`${fill} size-5`} viewBox="0 0 20 20" stroke="#b0b0b0" strokeWidth="1.500">
              <path d="M10 1 19 10 10 19 1 10Z" />
            </svg>
            {label}
          </li>
        ))}
      </ul>
    </div>
  );
}

function SalesTable() {
  return (
    <div className="overflow-hidden">
      <table className="w-[121%] table-fixed border-collapse text-[18px]/[25px] text-[#212121]">
        <thead className="text-left text-[17px] text-[#757575]">
          <tr className="h-[78px] border-b border-[#c6c6c6]">
            <th className="w-[202px] pr-[33px] text-right">ISBN</th>
            <th className="w-[171px]">Title</th>
            <th className="w-[192px]">Publisher</th>
            <th className="w-[115px]">Serie</th>
            <th className="w-[160px]">Store</th>
            <th className="w-[146px] pr-[33px] text-right">Quantity</th>
            <th className="w-[160px] pr-[33px] text-right">Price</th>
            <th className="pl-[44px]">Date</th>
          </tr>
        </thead>
        <tbody>
          {SALES.map((sale, i) => (
            <tr key={i} className="h-[65px] border-b border-[#c6c6c6] last:border-0">
              <td className="pr-[33px] text-right">{sale.isbn}</td>
              <td className="pr-[72px]">{sale.title}</td>
              <td>{sale.publisher}</td>
              <td>-</td>
              <td className="pr-[76px]">{sale.store}</td>
              <td className="pr-[33px]">
                <span className="ml-auto block w-7 rounded-xs bg-[#757575] text-center text-base/[25px] font-light text-white">
                  1
                </span>
              </td>
              <td className="pr-[33px] text-right">{sale.price}</td>
              <td className="pl-[44px]">
                <span className="rounded-sm bg-[#678ecb] px-[7px] py-[3px] text-sm text-white">Temporary</span>
              </td>
            </tr>
          ))}
        </tbody>
      </table>
      <div className="h-[22px] border-b border-[#ddd] bg-[#e8e8e8]">
        <div className="h-full w-[83%] bg-[#c0c0c0]" />
      </div>
    </div>
  );
}

function PagerSelect({ label, value }: { label: string; value: string }) {
  return (
    <div className="flex items-center">
      <select aria-label={label} className="w-7 appearance-none text-right outline-none" defaultValue={value}>
        <option>{value}</option>
      </select>
      <MdArrowDropDown className="ml-[2px] size-[33px]" />
    </div>
  );
}

function Pager() {
  return (
    <div className="mt-6 flex items-center justify-end pr-[22px] text-[17px] text-[#757575]">
      <PagerSelect label="Page" value="1" />
      <div className="ml-[165px]">
        <PagerSelect label="Rows per page" value="10" />
      </div>
      <div className="ml-[134px] flex gap-[22px] text-[#8c8c8c]">
        <button aria-label="First page">
          <MdFirstPage className="size-[33px]" />
        </button>
        <button aria-label="Previous page">
          <MdChevronLeft className="size-[33px]" />
        </button>
        <button aria-label="Next page">
          <MdChevronRight className="size-[33px]" />
        </button>
        <button aria-label="Last page">
          <MdLastPage className="size-[33px]" />
        </button>
      </div>
    </div>
  );
}

function HelpButton({ className }: { className: string }) {
  return (
    <button
      className={`${className} absolute right-[29px] flex h-[63px] w-[147px] items-center justify-center gap-[11px] rounded-full bg-[#678ecb] text-[22px] font-black text-white`}
    >
      <svg className="size-7" viewBox="0 0 28 28" fill="none" stroke="#fff" strokeWidth="2.500">
        <circle cx="14" cy="14" r="12.500" />
        <path d="M10.500 11C10.500 6.500 17.500 6.500 17.500 10.500C17.500 13.500 14 13 14 16.500" />
        <path d="M14 18.500V21" />
      </svg>
      Help
    </button>
  );
}

export default function App() {
  return (
    <div className="relative min-h-screen bg-[#f5f5f5] font-['Lato',sans-serif]">
      <Header />
      <div className="flex pl-[27px] pr-[69px]">
        <Sidebar />
        <main className="ml-[69px] min-w-0 flex-1 pt-[45px]">
          <h1 className="text-4xl/12 font-bold text-[#1c2a3c]">Analytics</h1>

          <div className="mt-[35px] flex h-[55px] gap-4">
            <div className="relative mt-1 h-[41px] w-[398px]">
              <select
                aria-label="Period"
                className="size-full appearance-none rounded-xs border-2 border-[#92908c] pl-[14px] font-['Open_Sans',sans-serif] text-lg text-[#595959]"
                defaultValue="quarter"
              >
                <option value="quarter">Quarter to date</option>
              </select>
              <svg className="pointer-events-none absolute right-[14px] top-[15px] h-[10px] w-5" viewBox="0 0 20 10">
                <path d="M0 0H20L10 10Z" />
              </svg>
            </div>
            <button
              aria-label="Filter"
              className="flex size-[55px] items-center justify-center rounded-full bg-[#3f51b5] text-white/90 shadow-md shadow-black/30"
            >
              <MdFilterList className="size-[33px]" />
            </button>
          </div>

          <Heading className="mt-[39px]">
            <span>
              OVER<b className="font-bold">VIEW</b>
            </span>
            <FaQuestionCircle className="size-[18px] text-[#ad3f3f]" />
          </Heading>
          <div className="mt-[17px] grid grid-cols-2 gap-x-[41px]">
            <OverviewCard title="EARNINGS" value="$13.19" />
            <OverviewCard title="UNITS" value="7" />
          </div>

          <Heading className="mt-[59px]">
            TOP PERFORMERS <b className="font-bold">EARNINGS</b>
          </Heading>
          <div className="mt-[17px] grid grid-cols-2 gap-x-[41px] gap-y-[27px]">
            <BarCard title="Top retailers" bars={RETAILERS} rowClass="h-[63px]" barClass="h-[44px]" />
            <BarCard title="Top titles" bars={TITLES} rowClass="h-[39px]" barClass="h-[27px]" />
            <BarCard title="Top authors" bars={AUTHORS} rowClass="h-[63px]" barClass="h-[44px]" />
            <BarCard title="Top genres" bars={GENRES} rowClass="h-[48px]" barClass="h-[33px]" />
          </div>

          <Heading className="mt-[60px]">
            SALES <b className="font-bold">PERFORMANCE</b>
          </Heading>
          <button
            aria-label="Chart type"
            className="ml-[11px] mt-[25px] flex size-[55px] items-center justify-center rounded-full bg-[#3f51b5] text-white/90 shadow-md shadow-black/30"
          >
            <MdMultilineChart className="size-[33px]" />
          </button>
          <SalesChart />
          <p className="mt-[7px] flex h-[25px] items-center justify-end gap-[5px] text-base text-[#666]">
            <span className="h-[25px] w-[22px] rounded-xs bg-[#aecbe0]" />
            Bars with this color define temporary data
          </p>

          <Heading className="mt-[46px]">
            TOP PERFORMERS <b className="font-bold">SALES</b>
          </Heading>
          <div className="mt-[17px] grid grid-cols-3 gap-x-[41px]">
            <PieCard title="Languages" legend={[['English', 'bg-[#3182bd]']]} pieClass="bg-[#6fa5d0]" />
            <PieCard title="Services" legend={[['Publish', 'bg-[#3182bd]']]} pieClass="bg-[#6fa5d0]" />
            <PieCard
              title="Free/Paid"
              legend={[
                ['Free', 'bg-[#3182bd]'],
                ['Paid', 'bg-[#6baed6]'],
              ]}
              pieClass="bg-[#97c5e2]"
            />
          </div>

          <Heading className="mt-[60px]">
            <b className="font-bold">WORLD</b> DISTRIBUTION
          </Heading>
          <WorldMap />

          <Heading className="mt-8">
            <b className="font-bold">ANALYTICS</b> SALES
          </Heading>
          <div className="mt-[17px] bg-white px-5 pb-[43px] pt-5 shadow-md shadow-black/10">
            <SalesTable />
            <Pager />
          </div>

          <footer className="mt-[58px] pb-5 text-[17px]/7 text-[#757575]">
            Copyright © 2016 StreetLib<b>.</b> <small className="text-[15px] text-[#999]">All rights reserved.</small>
          </footer>
        </main>
      </div>
      {HELP_TOPS.map((top) => (
        <HelpButton key={top} className={top} />
      ))}
    </div>
  );
}
